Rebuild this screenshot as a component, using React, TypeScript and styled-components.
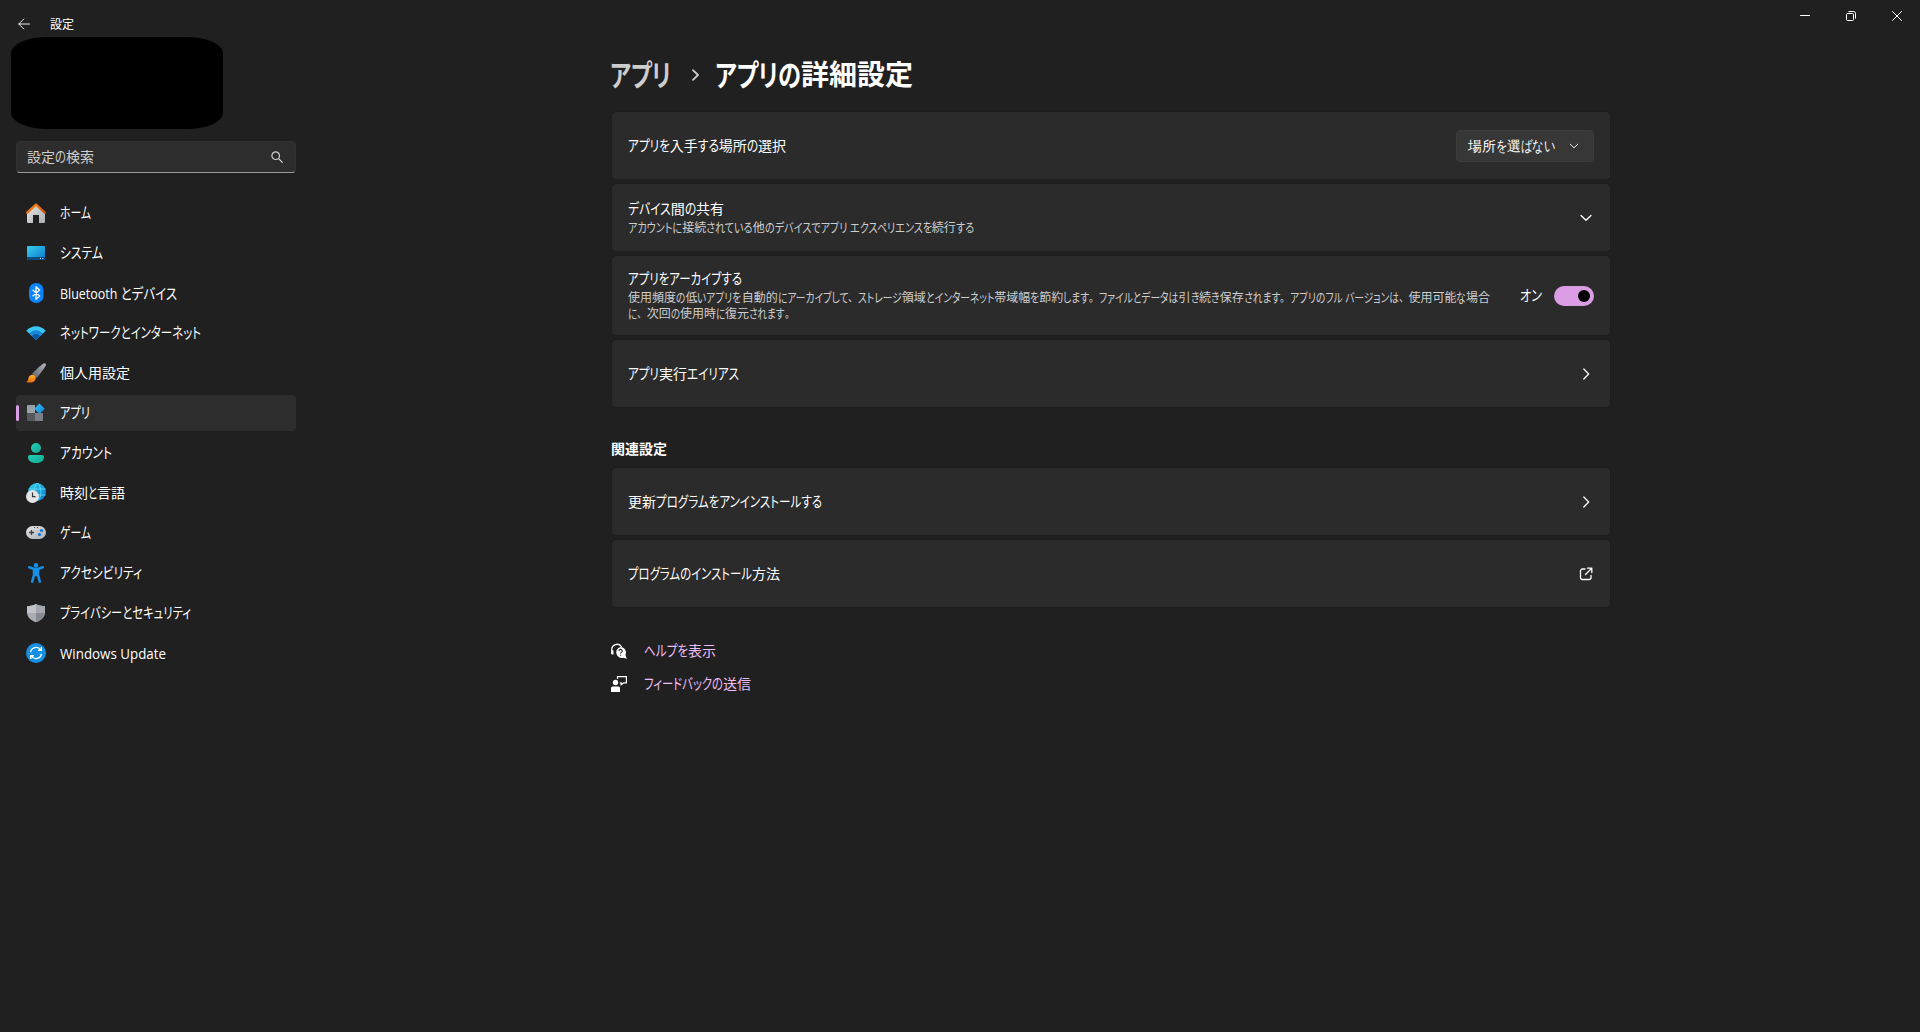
import React, { useLayoutEffect, useRef, useState } from "react";
import styled, { createGlobalStyle } from "styled-components";

const GlobalStyle = createGlobalStyle`
  * { box-sizing: border-box; }
  body {
    margin: 0;
    background: #202020;
    color: #fff;
    font-family: "Open Sans", "Noto Sans CJK JP", sans-serif;
    overflow: hidden;
  }
`;

/* ---------- text with condensed kana ---------- */

const Line = styled.span<{ $size: number; $weight: number; $shift: number }>`
  display: block;
  white-space: pre;
  font-size: ${(p) => p.$size}px;
  font-weight: ${(p) => p.$weight};
  line-height: 1;
  height: 1em;
  position: relative;
  top: ${(p) => p.$shift}px;
`;

const Run = styled.span<{ $full?: boolean }>`
  display: inline-block;
  white-space: pre;
  transform-origin: 0 50%;
  font-feature-settings: ${(p) => (p.$full ? "normal" : '"palt"')};
`;

type LabelProps = { text: string; width: number; size?: number; weight?: number; shift?: number };

const IDEOGRAPH = /[\u4e00-\u9fff]/;
const KANA = /[\u3040-\u30ff]/;
const STOPS = /[、。]/;

/* Ideographs keep their full width; kana, stops and Latin runs are condensed so the line takes `width` pixels. */
function Label({ text, width, size = 14, weight = 400, shift = 0 }: LabelProps) {
  const runs = text.match(/[\u4e00-\u9fff]+|[、。]+|[^\u4e00-\u9fff、。]+/g) || [];
  const ref = useRef<HTMLSpanElement>(null);
  const [fit, setFit] = useState<{ scale: number; widths: number[] } | null>(null);

  useLayoutEffect(() => {
    if (!ref.current) return;
    const spans = Array.from(ref.current.children) as HTMLElement[];
    const widths = spans.map((s) => parseFloat(getComputedStyle(s).width));
    let rigid = 0;
    let soft = 0;
    runs.forEach((r, i) => {
      if (IDEOGRAPH.test(r)) rigid += widths[i];
      else soft += widths[i];
    });
    setFit({ scale: soft > 0 ? (width - rigid) / soft : 1, widths });
  }, [text, width]);

  return (
    <Line ref={ref} $size={size} $weight={weight} $shift={shift}>
      {runs.map((r, i) => (
        <Run
          key={i}
          $full={STOPS.test(r)}
          style={
            fit && !IDEOGRAPH.test(r)
              ? {
                  transform: `scale(${fit.scale}, ${KANA.test(r) ? 1.06 : 1})`,
                  marginRight: (fit.scale - 1) * fit.widths[i],
                }
              : undefined
          }
        >
          {r}
        </Run>
      ))}
    </Line>
  );
}

/* ---------- window frame ---------- */

const Window = styled.div`
  display: flex;
  flex-direction: column;
  width: 1920px;
  height: 1032px;
  background: #202020;
`;

const TitleBar = styled.header`
  display: flex;
  justify-content: space-between;
  align-items: flex-start;
  height: 37px;
  flex: none;
`;

const TitleLeft = styled.div`
  display: flex;
  align-items: center;
  gap: 20px;
  padding: 16px 0 0 18px;
  height: 32px;
`;

const Controls = styled.div`
  display: flex;
`;

const Control = styled.button`
  display: flex;
  align-items: center;
  justify-content: center;
  width: 46px;
  height: 32px;
  padding: 0;
  border: 0;
  background: none;
  color: #fff;
`;

const Columns = styled.div`
  display: flex;
  flex: 1;
`;

/* ---------- sidebar ---------- */

const Sidebar = styled.aside`
  width: 611px;
  flex: none;
  display: flex;
  flex-direction: column;
`;

const Profile = styled.div`
  width: 212px;
  height: 92px;
  margin-left: 11px;
  border-radius: 36px / 16px;
  background: #000;
`;

const Search = styled.div`
  display: flex;
  align-items: center;
  justify-content: space-between;
  width: 280px;
  height: 32px;
  margin: 12px 0 22px 16px;
  padding: 0 12px 0 10px;
  border: 1px solid #303030;
  border-bottom-color: #9a9a9a;
  border-radius: 4px;
  background: #2d2d2d;
  color: #cfcfcf;
`;

const Nav = styled.nav`
  display: flex;
  flex-direction: column;
  gap: 4px;
  margin-left: 16px;
  width: 280px;
`;

const NavItem = styled.a<{ $active?: boolean }>`
  display: flex;
  align-items: center;
  height: 36px;
  border-radius: 4px;
  background: ${(p) => (p.$active ? "#2d2d2d" : "transparent")};
  color: #fff;
  &::before {
    content: "";
    width: 3px;
    height: 16px;
    margin-right: 7px;
    border-radius: 2px;
    background: ${(p) => (p.$active ? "#db9ee5" : "transparent")};
  }
  & > svg {
    margin-right: 14px;
    flex: none;
  }
`;

/* ---------- main column ---------- */

const Main = styled.main`
  width: 1000px;
  display: flex;
  flex-direction: column;
`;

const Crumbs = styled.h1`
  display: flex;
  align-items: center;
  height: 40px;
  margin: 18px 0 16px -1px;
  font-weight: 600;
`;

const Parent = styled.span`
  color: #cdcdcd;
  width: 82px;
`;

const CrumbArrow = styled.span`
  display: flex;
  width: 23px;
  color: #cdcdcd;
`;

const Cards = styled.section`
  display: flex;
  flex-direction: column;
  gap: 3px;
`;

const Card = styled.div<{ $tall?: boolean }>`
  display: flex;
  align-items: center;
  justify-content: space-between;
  height: ${(p) => (p.$tall ? 81 : 69)}px;
  padding: 0 16px;
  border: 1px solid #1d1d1d;
  border-radius: 5px;
  background: #2b2b2b;
`;

const CardText = styled.div`
  display: flex;
  flex-direction: column;
`;

const Caption = styled.div`
  display: flex;
  flex-direction: column;
  gap: 4px;
  margin-top: 5px;
  color: #cecece;
`;

const Select = styled.button`
  display: flex;
  align-items: center;
  justify-content: space-between;
  width: 138px;
  height: 32px;
  padding: 0 14px 0 11px;
  border: 1px solid #3c3c3c;
  border-radius: 4px;
  background: #373737;
  color: #fff;
`;

const Trailing = styled.div`
  display: flex;
  align-items: center;
  gap: 12px;
`;

const IconCell = styled.span`
  display: flex;
  width: 16px;
  justify-content: center;
`;

const Toggle = styled.span`
  display: flex;
  align-items: center;
  justify-content: flex-end;
  width: 40px;
  height: 20px;
  padding-right: 4px;
  border-radius: 10px;
  background: #db9ee5;
  &::after {
    content: "";
    width: 12px;
    height: 12px;
    border-radius: 50%;
    background: #000;
  }
`;

const SectionTitle = styled.h2`
  display: flex;
  align-items: center;
  height: 20px;
  margin: 32px 0 7px;
`;

const Links = styled.div`
  display: flex;
  flex-direction: column;
  gap: 13px;
  margin-top: 33px;
`;

const LinkRow = styled.a`
  display: flex;
  align-items: center;
  gap: 17px;
  height: 20px;
  color: #edbef4;
`;

/* ---------- glyphs ---------- */

const Stroke = ({ w, h, d, sw = 1 }: { w: number; h: number; d: string; sw?: number }) => (
  <svg width={w} height={h} viewBox={`0 0 ${w} ${h}`} fill="none" stroke="currentColor" strokeWidth={sw} strokeLinecap="round" strokeLinejoin="round">
    <path d={d} />
  </svg>
);

const BackIcon = () => <Stroke w={12} h={12} d="M11.500 6H.8M5.800 1 .8 6l5 5" sw={0.9} />;
const ChevronDown = () => <Stroke w={12} h={8} d="M1 1.500 6 6.300 11 1.500" sw={1.3} />;
const ChevronDownSmall = () => <Stroke w={10} h={6} d="M1.300 1.200 5 4.800 8.700 1.200" sw={0.9} />;
const ChevronRight = () => <Stroke w={8} h={12} d="M1.800 1 6.700 6 1.800 11" sw={1.3} />;

const NAV_ICONS: Record<string, React.ReactNode> = {
  home: (
    <>
      <path d="M1 9 10 1.500 19 9v9.800a1.200 1.200 0 0 1-1.200 1.200H13v-8H7v8H2.200A1.200 1.200 0 0 1 1 18.800z" fill="url(#silver)" />
      <path d="M1.200 9.600 10 1.700l8.800 7.900" fill="none" stroke="url(#roof)" strokeWidth="2.400" strokeLinecap="round" strokeLinejoin="round" />
    </>
  ),
  system: (
    <>
      <rect x="1" y="3" width="18" height="14" rx="1" fill="url(#screen)" />
      <path d="M1 14h18v2a1 1 0 0 1-1 1H2a1 1 0 0 1-1-1z" fill="#0a4c7c" />
      <path d="M14 15.500h1M16.300 15.500h1" stroke="#c6e8fb" />
    </>
  ),
  bluetooth: (
    <>
      <rect x="3" y="0" width="14.500" height="20" rx="7" fill="#0a84fa" />
      <path d="m6.600 6.700 7 6.400-3.600 3.200V3.700l3.600 3.200-7 6.400" fill="none" stroke="#fff" strokeWidth="1.300" strokeLinejoin="round" />
    </>
  ),
  network: (
    <>
      <path d="M.3 7.800C5.500 1.600 14.500 1.600 19.700 7.800L10 17z" fill="#3cc8f6" />
      <path d="M3.200 10.500C7 6 13 6 16.800 10.500L10 17z" fill="#1a86d8" />
      <path d="M6 13.200C8.300 10.400 11.700 10.400 14 13.200L10 17z" fill="#0d57a8" />
    </>
  ),
  brush: (
    <>
      <path d="M19.500.5c1 1 .1 3-2 5.800L10.800 15 6 10.800 13.500 3.500C16.500.8 18.600-.4 19.500.5z" fill="url(#steel)" />
      <path d="M5.200 12c2.700-1 5 1 4.500 3.700C9 19.300 4 20.400.3 19c1.700-.7 1.900-1.800 2.100-3.400.3-1.800 1.100-3 2.800-3.600z" fill="url(#flame)" />
    </>
  ),
  apps: (
    <>
      <path d="M1 3a1 1 0 0 1 1-1h7v8H1z" fill="#9aa0a8" />
      <path d="M1 10h8v8H2a1 1 0 0 1-1-1z" fill="#55585c" />
      <path d="M9 10h8v7a1 1 0 0 1-1 1H9z" fill="#7c8086" />
      <path d="m13.500.4 5.300 5.300-5.300 5.300-5.300-5.300z" fill="url(#diamond)" strokeLinejoin="round" />
    </>
  ),
  account: (
    <>
      <circle cx="10" cy="5" r="5" fill="url(#teal)" />
      <path d="M4 12h12a2 2 0 0 1 2 2c0 4-3.500 6-8 6s-8-2-8-6a2 2 0 0 1 2-2z" fill="url(#teal)" />
    </>
  ),
  time: (
    <>
      <circle cx="11" cy="9" r="9" fill="url(#screen)" />
      <path d="M11 0c-4 4-4 14 0 18M11.500 0c4.500 4 4.500 14 0 18M3 6h16.500M3 12h16.500" fill="none" stroke="#5fe0f4" strokeWidth=".8" />
      <circle cx="6.500" cy="13.500" r="6.500" fill="#e4e4e6" />
      <path d="M6.500 9.500v4.200h3" fill="none" stroke="#333" strokeWidth="1.200" />
    </>
  ),
  game: (
    <>
      <rect x="0" y="3" width="20" height="13" rx="6.500" fill="url(#silver)" />
      <path d="M5.500 7v5M3 9.500h5" stroke="#3b3e43" strokeWidth="1.300" />
      <circle cx="15.500" cy="7.500" r="1.600" fill="#0a78d4" />
      <circle cx="13.500" cy="11.500" r="1.600" fill="#0a78d4" />
      <path d="M8 4.500h1M11 4.500h1" stroke="#3b3e43" />
    </>
  ),
  access: (
    <>
      <circle cx="10" cy="2.200" r="2.200" fill="#1590e6" />
      <path d="M3.200 4.300 7.500 5.800h5l4.300-1.500M8 6.500v5.700L6.200 18.700M12 6.500v5.700l1.800 6.500M10 6v6" fill="none" stroke="#1590e6" strokeWidth="2.500" strokeLinecap="round" strokeLinejoin="round" />
    </>
  ),
  shield: (
    <>
      <path d="M10 1c2.500 1.500 5.500 2 9 2.200V9c0 5-3.500 8.300-9 10.200C4.500 17.300 1 14 1 9V3.200C4.500 3 7.500 2.500 10 1z" fill="#a9adb3" />
      <path d="M10 1c2.500 1.500 5.500 2 9 2.200V9c0 .4 0 .7-.1 1H10z" fill="#a4a8ae" />
      <path d="M10 10h8.900c-.5 4.400-3.900 7.400-8.900 9.200z" fill="#868b92" />
      <path d="M10 1C7.500 2.500 4.500 3 1 3.200V9c0 .4 0 .7.1 1H10z" fill="#c0c3c8" />
    </>
  ),
  update: (
    <>
      <circle cx="10" cy="10" r="10" fill="#1590e2" />
      <path d="M4.600 9.200A5.500 5.500 0 0 1 14.700 7M15.400 10.800A5.500 5.500 0 0 1 5.300 13M15.300 4v3.300H12M4.700 16v-3.300H8" fill="none" stroke="#fff" strokeWidth="1.400" />
    </>
  ),
};

const Gradients = () => (
  <svg width="0" height="0" style={{ display: "block" }}>
    <defs>
      <linearGradient id="silver" x1="0" y1="0" x2="1" y2="1"><stop stopColor="#e4e6e8" /><stop offset="1" stopColor="#abaeb2" /></linearGradient>
      <linearGradient id="roof" x1="0" y1="0" x2="1" y2="1"><stop stopColor="#fb8f1c" /><stop offset="1" stopColor="#cf500c" /></linearGradient>
      <linearGradient id="screen" x1="0" y1="0" x2="1" y2="1"><stop stopColor="#35d0ea" /><stop offset="1" stopColor="#0c76cf" /></linearGradient>
      <linearGradient id="diamond" x1="0" y1="0" x2="1" y2="1"><stop stopColor="#3cc4f4" /><stop offset="1" stopColor="#0c7ed8" /></linearGradient>
      <linearGradient id="steel" x1="1" y1="0" x2="0" y2="1"><stop stopColor="#b4b8bd" /><stop offset="1" stopColor="#5c6066" /></linearGradient>
      <linearGradient id="flame" x1="0" y1="0" x2="0" y2="1"><stop stopColor="#ffb12e" /><stop offset="1" stopColor="#ef6a10" /></linearGradient>
      <linearGradient id="teal" x1="0" y1="0" x2="1" y2="1"><stop stopColor="#22cfb4" /><stop offset="1" stopColor="#10a892" /></linearGradient>
    </defs>
  </svg>
);

const NAV: [string, string, number, number?][] = [
  ["home", "ホーム", 31],
  ["system", "システム", 43],
  ["bluetooth", "Bluetooth とデバイス", 117, 1],
  ["network", "ネットワークとインターネット", 141],
  ["brush", "個人用設定", 70],
  ["apps", "アプリ", 30],
  ["account", "アカウント", 52],
  ["time", "時刻と言語", 65],
  ["game", "ゲーム", 31],
  ["access", "アクセシビリティ", 82],
  ["shield", "プライバシーとセキュリティ", 131],
  ["update", "Windows Update", 106, 1],
];

export default function App() {
  return (
    <Window>
      <GlobalStyle />
      <Gradients />
      <TitleBar>
        <TitleLeft>
          <BackIcon />
          <Label text="設定" width={24} size={12} shift={1} />
        </TitleLeft>
        <Controls>
          <Control><Stroke w={10} h={10} d="M.5 4.500h9" /></Control>
          <Control>
            <Stroke w={10} h={10} d="M1.500 2.500h5a1 1 0 0 1 1 1v5a1 1 0 0 1-1 1h-5a1 1 0 0 1-1-1v-5a1 1 0 0 1 1-1zM2.800.5h4.700a2 2 0 0 1 2 2v4.700" />
          </Control>
          <Control><Stroke w={10} h={10} d="m.5.5 9 9M9.500.5l-9 9" /></Control>
        </Controls>
      </TitleBar>
      <Columns>
        <Sidebar>
          <Profile />
          <Search>
            <Label text="設定の検索" width={67} />
            <Stroke w={12} h={12} d="M8.500 4.700a3.800 3.800 0 1 1-7.600 0 3.800 3.800 0 0 1 7.600 0zM7.500 7.500l3.800 3.800" sw={1.2} />
          </Search>
          <Nav>
            {NAV.map(([icon, text, width, shift]) => (
              <NavItem key={icon} $active={icon === "apps"}>
                <svg width="20" height="20" viewBox="0 0 20 20">{NAV_ICONS[icon]}</svg>
                <Label text={text} width={width} shift={shift} />
              </NavItem>
            ))}
          </Nav>
        </Sidebar>
        <Main>
          <Crumbs>
            <Parent><Label text="アプリ" width={61} size={28} weight={600} shift={-1} /></Parent>
            <CrumbArrow><Stroke w={8} h={12} d="M1 1.200 6 6l-5 4.800" sw={1.8} /></CrumbArrow>
            <Label text="アプリの詳細設定" width={198} size={28} weight={600} shift={-1} />
          </Crumbs>
          <Cards>
            <Card>
              <Label text="アプリを入手する場所の選択" width={158} />
              <Select>
                <Label text="場所を選ばない" width={87} />
                <ChevronDownSmall />
              </Select>
            </Card>
            <Card>
              <CardText>
                <Label text="デバイス間の共有" width={96} />
                <Caption>
                  <Label size={12} shift={1} text="アカウントに接続されている他のデバイスでアプリ エクスペリエンスを続行する" width={346} />
                </Caption>
              </CardText>
              <IconCell><ChevronDown /></IconCell>
            </Card>
            <Card $tall>
              <CardText>
                <Label text="アプリをアーカイブする" width={114} />
                <Caption>
                  <Label size={12} shift={1} text="使用頻度の低いアプリを自動的にアーカイブして、ストレージ領域とインターネット帯域幅を節約します。ファイルとデータは引き続き保存されます。アプリのフル バージョンは、使用可能な場合" width={862} />
                  <Label size={12} shift={1} text="に、次回の使用時に復元されます。" width={166} />
                </Caption>
              </CardText>
              <Trailing>
                <Label text="オン" width={22} />
                <Toggle />
              </Trailing>
            </Card>
            <Card>
              <Label text="アプリ実行エイリアス" width={111} />
              <IconCell><ChevronRight /></IconCell>
            </Card>
          </Cards>
          <SectionTitle><Label text="関連設定" width={56} weight={700} shift={-1} /></SectionTitle>
          <Cards>
            <Card>
              <Label text="更新プログラムをアンインストールする" width={194} />
              <IconCell><ChevronRight /></IconCell>
            </Card>
            <Card>
              <Label text="プログラムのインストール方法" width={152} />
              <IconCell>
                <Stroke w={14} h={14} d="M6 2H3.500A2 2 0 0 0 1.500 4v6.500a2 2 0 0 0 2 2H10a2 2 0 0 0 2-2V8.500M8.500 1.200h4.300v4.300M12.600 1.400 6.500 7.500" sw={1.3} />
              </IconCell>
            </Card>
          </Cards>
          <Links>
            <LinkRow>
              <svg width="16" height="16" viewBox="0 0 16 16">
                <path d="M.8 10.500V6.800a5.300 5.300 0 0 1 9.800-3" fill="none" stroke="#fff" strokeWidth="1.300" />
                <path d="M.2 7.500h2.300v4H1.200a1 1 0 0 1-1-1z" fill="#fff" />
                <path d="M9.500 4a5.500 5.500 0 0 1 4.900 8l1.400 3.800-3.600-1A5.500 5.500 0 1 1 9.500 4z" fill="#fff" />
                <path d="M8 8a1.600 1.600 0 1 1 2.300 1.400c-.5.300-.7.500-.7 1.100M9.600 11.700v1" fill="none" stroke="#202020" strokeWidth="1.100" />
              </svg>
              <Label text="ヘルプを表示" width={72} shift={-0.5} />
            </LinkRow>
            <LinkRow>
              <svg width="16" height="16" viewBox="0 0 16 16">
                <circle cx="4.500" cy="6.500" r="2.700" fill="#fff" />
                <path d="M1.500 10.500h6A1.500 1.500 0 0 1 9 12v4H0v-4a1.500 1.500 0 0 1 1.500-1.500z" fill="#fff" />
                <path d="M6.500 3V.6h8.900v6.200h-2.600l-2.600 2V6.800H8.800" fill="none" stroke="#fff" strokeWidth="1.200" />
              </svg>
              <Label text="フィードバックの送信" width={107} shift={-0.5} />
            </LinkRow>
          </Links>
        </Main>
      </Columns>
    </Window>
  );
}
